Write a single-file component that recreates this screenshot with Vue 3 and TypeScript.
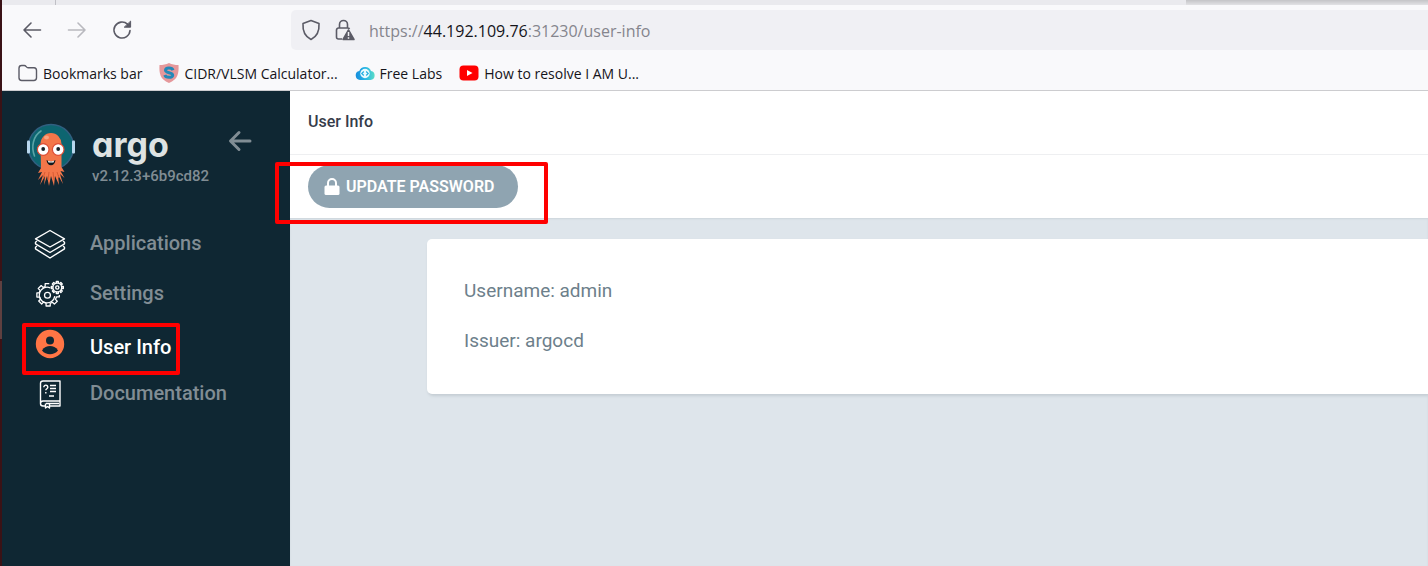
<script setup lang="ts">
interface Bookmark {
  id: 'folder' | 'cidr' | 'labs' | 'video'
  label: string
}
interface NavItem {
  id: 'apps' | 'settings' | 'user' | 'docs'
  label: string
  active?: boolean
}

const bookmarks: Bookmark[] = [
  { id: 'folder', label: 'Bookmarks bar' },
  { id: 'cidr', label: 'CIDR/VLSM Calculator...' },
  { id: 'labs', label: 'Free Labs' },
  { id: 'video', label: 'How to resolve I AM U...' },
]

const navItems: NavItem[] = [
  { id: 'apps', label: 'Applications' },
  { id: 'settings', label: 'Settings' },
  { id: 'user', label: 'User Info', active: true },
  { id: 'docs', label: 'Documentation' },
]

const teeth = [0, 45, 90, 135, 180, 225, 270, 315]
</script>

<template>
  <div class="window">
    <header class="chrome">
      <div class="tabstrip"><span class="popup-shadow"></span></div>
      <div class="toolbar">
        <div class="history">
          <button type="button" aria-label="Back">
            <svg width="20" height="20" viewBox="0 0 20 20" class="line"><path d="M18.5 10H2M9 3 2 10l7 7" /></svg>
          </button>
          <button type="button" aria-label="Forward" disabled>
            <svg width="20" height="20" viewBox="0 0 20 20" class="line"><path d="M1.500 10H18M11 3l7 7-7 7" /></svg>
          </button>
          <button type="button" aria-label="Reload">
            <svg width="20" height="20" viewBox="0 0 20 20" class="line">
              <path d="M18 10.500a8 8 0 1 1-2.500-6.300L17 5.500" />
              <path d="M18.600 1.500v5.700h-6z" class="solid" />
            </svg>
          </button>
        </div>
        <a class="address" href="#" aria-label="Page address">
          <svg width="20" height="22" viewBox="0 0 20 22" class="line">
            <path d="M10 1.500 18 4.500C18.500 12 16 17.500 10 20.500 4 17.500 1.500 12 2 4.500Z" />
          </svg>
          <svg width="20" height="22" viewBox="0 0 20 22">
            <path d="M4.500 9V5.500a4 4 0 0 1 8 0V9M7 20H3.500a2 2 0 0 1-2-2v-7a2 2 0 0 1 2-2h9a2 2 0 0 1 2 1" fill="none" stroke="#5b5b66" stroke-width="1.600" />
            <path d="M13.500 11 19 20.500H8Z" fill="#5b5b66" stroke="#5b5b66" stroke-width="1.500" stroke-linejoin="round" />
            <path d="M13.500 13v4M13.500 18.300v1.500" stroke="#f0f0f4" stroke-width="1.500" />
          </svg>
          <span class="url">https://<b>44.192.109.76</b>:31230/user-info</span>
        </a>
      </div>
      <nav class="bookmarks" aria-label="Bookmarks">
        <a v-for="b in bookmarks" :key="b.id" href="#">
          <svg v-if="b.id === 'folder'" width="20" height="18" viewBox="0 0 20 18">
            <path d="M1 4.200A2.700 2.700 0 0 1 3.700 1.500h2.600c1.900 0 1.900 2.300 3.700 2.300h6A2.700 2.700 0 0 1 18.500 6.500v7.300a2.700 2.700 0 0 1-2.700 2.700H3.700A2.700 2.700 0 0 1 1 13.800Z" fill="none" stroke="#5b5b66" stroke-width="1.400" />
          </svg>
          <svg v-else-if="b.id === 'cidr'" width="20" height="20" viewBox="0 0 20 20">
            <path d="M10 0c3 1.500 6 2 9.500 2C20 10 19 16.500 10 20 1 16.500 0 10 .5 2 4 2 7 1.500 10 0Z" fill="#e5989b" />
            <path d="M14 7.200C13 4.300 6.500 4.300 6.500 7.300c0 3 7.200 1.800 7.200 4.900 0 3-7 2.700-7.900-.2" fill="none" stroke="#2389b8" stroke-width="3" />
          </svg>
          <svg v-else-if="b.id === 'labs'" width="20" height="16" viewBox="0 0 20 16">
            <defs><linearGradient id="cloud"><stop stop-color="#178ddd" /><stop offset=".5" stop-color="#25b5e5" /><stop offset="1" stop-color="#5cdcc6" /></linearGradient></defs>
            <path d="M5 15a4.500 4.500 0 0 1-.7-8.900A6.200 6.200 0 0 1 16 6.100 4.500 4.500 0 0 1 15.500 15Z" fill="url(#cloud)" />
            <circle cx="10" cy="8.500" r="4.700" fill="#e9fafe" />
            <path d="m8.800 6.500-2 2 2 2M11.200 6.500l2 2-2 2" fill="none" stroke="#23aee0" stroke-width="1.200" />
          </svg>
          <svg v-else width="20" height="16" viewBox="0 0 20 16">
            <rect x=".5" y=".5" width="19" height="15" rx="4" fill="#f00" />
            <path d="m8 5 5.500 3L8 11Z" fill="#fff" />
          </svg>
          <span>{{ b.label }}</span>
        </a>
      </nav>
    </header>

    <div class="app">
      <aside class="sidebar">
        <div class="brand">
          <svg width="50" height="64" viewBox="0 0 50 64" aria-hidden="true">
            <circle cx="25" cy="24" r="22.500" fill="#0d6570" stroke="#315f80" stroke-width="1.500" />
            <path d="M8.500 33C5 24 7 13 15 8" fill="none" stroke="#5ba4a7" stroke-width="1.600" stroke-linecap="round" />
            <rect x="1" y="17.500" width="3" height="13" rx="1" fill="#b8d7ee" />
            <rect x="46" y="17.500" width="3" height="13" rx="1" fill="#b8d7ee" />
            <path d="M14.500 21a10.500 11 0 0 1 21 0v23l3 5-4-1 4 7-4.500-4 3 10-5-9 1 10-4-9-1 10-3-10-2 10-2-10-3 9 1-9-5 9 3-10-5 5 4-8-4 1 3-5Z" fill="#f37649" />
            <path d="M19 49l-2 6M23 49l-1 8M27 49l1 8M31 49l2 6" fill="none" stroke="#d65a34" />
            <ellipse cx="20.500" cy="14.500" rx="2.500" ry="2" fill="#f7a37f" />
            <g stroke="#dd4e36" stroke-width="1.200" fill="#fff"><circle cx="17.200" cy="26.500" r="5.800" /><circle cx="32.200" cy="26.500" r="5.800" /></g>
            <circle cx="17.200" cy="26" r="1.900" fill="#17222a" /><circle cx="32.200" cy="26" r="1.900" fill="#17222a" />
            <path d="M20.500 37c3 2 6 2 9 0-.5 7-8.500 7-9 0Z" fill="#10191d" />
            <path d="M22 37.800c2 1 4 1 6 0l-.5 1.700h-5Z" fill="#fff" />
          </svg>
          <div class="brand-text">
            <span class="wordmark">argo</span>
            <span class="version">v2.12.3+6b9cd82</span>
          </div>
          <button type="button" class="collapse" aria-label="Collapse sidebar">
            <svg width="24" height="22" viewBox="0 0 24 22"><path d="M22 11H3M11 2.500 2.500 11l8.500 8.500" /></svg>
          </button>
        </div>
        <nav class="menu" aria-label="Main">
          <a v-for="item in navItems" :key="item.id" href="#" :class="{ active: item.active }">
            <svg v-if="item.id === 'apps'" width="32" height="32" viewBox="0 0 32 32" class="outline">
              <path d="m16 2.500 14.500 8.300L16 19 1.500 10.800Z" />
              <path d="m3 13-1.500 1.200v1.600L16 24.500l14.500-8.700v-1.600L29 13" />
              <path d="m3 18-1.500 1.200v1.600L16 30l14.500-9.200v-1.600L29 18" />
            </svg>
            <svg v-else-if="item.id === 'settings'" width="32" height="32" viewBox="0 0 32 32" class="outline">
              <g transform="translate(1.500 2.500) scale(.92)">
                <path d="M16 8A8.500 8.500 0 1 0 21 17" />
                <path d="M15 3.500h-4.500v3l-2.300 1-2-2L3 8.700l2 2-1 2.800H1.500v4.500h3l1 2.300-2 2 3.200 3.200 2-2 2.800 1.200v3h4.500v-3l2.500-1 2 2 3.200-3.200-2-2 1.200-2.700h3v-2" />
                <circle cx="13" cy="16" r="3.200" />
              </g>
              <circle cx="23.300" cy="9.500" r="1.600" />
              <circle cx="23.300" cy="9.500" r="4.400" />
              <path v-for="t in teeth" :key="t" d="M22.300 5V3.500h2V5" :transform="`rotate(${t} 23.300 9.500)`" />
            </svg>
            <svg v-else-if="item.id === 'user'" width="32" height="32" viewBox="0 0 32 32">
              <circle cx="16" cy="16" r="14.200" fill="#ff7545" />
              <circle cx="16" cy="12.500" r="4" fill="#0f2733" />
              <path d="M8 22.500c2-3.500 5-4.500 8-4.500s6 1 8 4.500c-4 5-12 5-16 0Z" fill="#0f2733" />
            </svg>
            <svg v-else width="32" height="32" viewBox="0 0 32 32" class="outline">
              <path d="M11 28H9a2.500 2.500 0 0 1-2.500-2.500V5.500A2.500 2.500 0 0 1 9 3H26v20H9a2.500 2.500 0 0 0-2.500 2.500M26 23v5H16M12 25.500h13" />
              <path d="M11.500 25.500V30l2-1.500 2 1.500v-4.500M9.800 9.300c0-3 4-2.700 4 0 0 1.500-2 1.500-2 3M11.800 14v1.500M16 7.500h6M16 10.500h6M16 13.500h6M15 18h5" />
            </svg>
            <span>{{ item.label }}</span>
            <i v-if="item.active" class="mark mark-menu"></i>
          </a>
        </nav>
      </aside>

      <main class="page">
        <h1>User Info</h1>
        <div class="actions">
          <button type="button" class="update">
            <svg width="16" height="18" viewBox="0 0 16 18"><path d="M4 8V5a4 4 0 0 1 8 0v3" fill="none" stroke="#fff" stroke-width="2" /><rect x=".5" y="7.500" width="15" height="9.500" rx="1.500" fill="#fff" /></svg>
            <span>UPDATE PASSWORD</span>
          </button>
          <i class="mark mark-actions"></i>
        </div>
        <div class="content">
          <section class="card">
            <p>Username: admin</p>
            <p>Issuer: argocd</p>
          </section>
        </div>
      </main>
    </div>
  </div>
</template>

<style>
body {
  margin: 0;
  overflow: hidden;
}
</style>

<style scoped>
* {
  box-sizing: border-box;
}
.window {
  display: flex;
  flex-direction: column;
  min-height: 100vh;
  padding-left: 2px;
  background: linear-gradient(#3a1216 0 281px, #5f4040 281px 339px, #3a1216 339px);
  font-family: Roboto, "Liberation Sans", sans-serif;
}
button {
  padding: 0;
  border: 0;
  background: none;
  font: inherit;
}
a {
  text-decoration: none;
}
svg {
  display: block;
  flex: none;
}
.chrome {
  background: #f9f9fb;
  border-bottom: 1px solid #cccccf;
  font-family: "Open Sans", "Noto Sans", sans-serif;
}
.tabstrip {
  display: flex;
  justify-content: flex-end;
  height: 5px;
  overflow: hidden;
  background: linear-gradient(90deg, transparent 53px, #c0c0c6 53px 54px, transparent 54px) #eaeaee;
}
.popup-shadow {
  width: 17%;
  height: 5px;
  background: linear-gradient(#c4c4c7, #e2e2e5);
}
.toolbar {
  display: flex;
  align-items: center;
  height: 50px;
}
.history {
  display: flex;
  gap: 25px;
  width: 289px;
  padding-left: 20px;
}
.line {
  fill: none;
  stroke: #5b5b66;
  stroke-width: 1.6;
  stroke-linecap: round;
  stroke-linejoin: round;
}
.line .solid {
  fill: #5b5b66;
  stroke-width: 1;
}
button:disabled {
  opacity: 0.4;
}
.address {
  display: flex;
  flex: 1;
  align-items: center;
  gap: 14px;
  height: 40px;
  padding-left: 10px;
  border-radius: 5px 0 0 5px;
  background: #f0f0f4;
}
.url {
  padding-top: 2px;
  color: #85858d;
  font-size: 16px;
  line-height: 24px;
  white-space: nowrap;
}
.url b {
  color: #15141a;
  font-weight: 400;
}
.bookmarks {
  display: flex;
  gap: 17px;
  height: 35px;
  padding-left: 16px;
}
.bookmarks a {
  display: flex;
  align-items: center;
  gap: 5px;
  color: #15141a;
  font-size: 14px;
  line-height: 20px;
  white-space: nowrap;
}
.bookmarks span {
  padding-top: 2px;
}
.app {
  display: flex;
  flex: 1;
}
.sidebar {
  flex: none;
  width: 288px;
  background: #0f2733;
}
.brand {
  display: flex;
  align-items: flex-start;
  padding: 32px 0 0 24px;
}
.brand-text {
  display: flex;
  flex-direction: column;
  width: 136px;
  padding-left: 16px;
}
.wordmark {
  color: #dee3e3;
  font-family: Inter, sans-serif;
  font-size: 34px;
  font-weight: 700;
  line-height: 44px;
  font-feature-settings: "cv11" 1;
}
.version {
  color: #818d94;
  font-size: 15px;
  font-weight: 500;
  line-height: 18px;
}
.collapse {
  padding: 7px 0 0 16px;
}
.collapse path {
  fill: none;
  stroke: #818d94;
  stroke-width: 3;
  stroke-linecap: round;
  stroke-linejoin: round;
}
.menu {
  display: flex;
  flex-direction: column;
  gap: 18px;
  padding: 41px 0 0 32px;
}
.menu a {
  position: relative;
  display: flex;
  align-items: center;
  gap: 24px;
  height: 32px;
  color: #818d94;
  font-size: 20px;
  font-weight: 500;
  line-height: 22px;
}
.menu span {
  padding-bottom: 2px;
}
.menu .active {
  align-items: flex-end;
  color: #fff;
}
.outline {
  fill: none;
  stroke: #fff;
  stroke-width: 1.4;
  stroke-linejoin: round;
}
.page {
  display: flex;
  flex: 1;
  flex-direction: column;
  background: #fff;
}
h1 {
  margin: 0;
  padding: 21px 18px 22px;
  border-bottom: 1px solid #eeeff1;
  color: #363c4a;
  font-size: 16px;
  font-weight: 500;
  line-height: 20px;
}
.actions {
  position: relative;
  padding: 10px 18px;
}
.update {
  display: flex;
  align-items: center;
  gap: 6px;
  height: 43px;
  padding: 0 24px 0 16px;
  border-radius: 22px;
  background: #8fa4b1;
  color: #fff;
  font-size: 16px;
  font-weight: 600;
}
.content {
  flex: 1;
  padding: 21px 0 21px 137px;
  background: #dee5eb;
  box-shadow: inset 0 1px 2px #cdd5db;
}
.card {
  padding: 39px 37px 41px;
  border-radius: 5px 0 0 5px;
  background: #fff;
  box-shadow: 1px 2px 3px #c4cdd3;
  color: #6d7f8b;
  font-size: 19px;
  line-height: 25px;
}
.card p {
  margin: 0;
}
.card p + p {
  margin-top: 25px;
}
.mark {
  position: absolute;
  border: 4px solid #f00;
  border-radius: 2px;
  pointer-events: none;
}
.mark-menu {
  top: -5px;
  left: -12px;
  width: 158px;
  height: 52px;
}
.mark-actions {
  top: 7px;
  left: -15px;
  width: 273px;
  height: 62px;
  z-index: 1;
}
</style>
